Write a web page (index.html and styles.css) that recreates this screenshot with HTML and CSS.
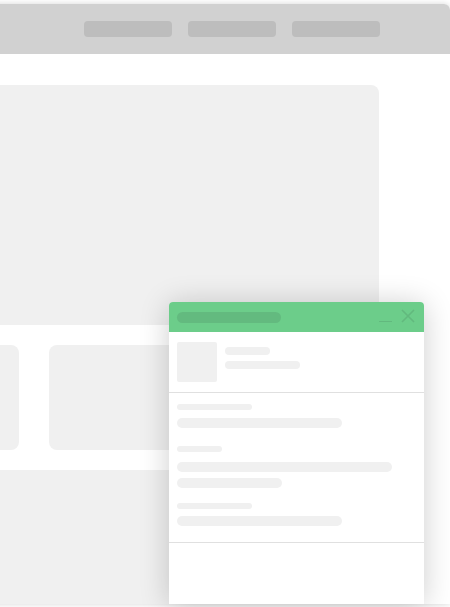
FILE: index.html
```html
<!DOCTYPE html>
<html>
<head>
<meta charset="utf-8">
<link rel="stylesheet" href="styles.css">
</head>
<body>
<div class="window">
  <header class="topbar">
    <span class="nav-pill"></span>
    <span class="nav-pill"></span>
    <span class="nav-pill"></span>
  </header>
  <main class="content">
    <section class="hero"></section>
    <section class="cards">
      <div class="card card-a"></div>
      <div class="card card-b"></div>
    </section>
    <section class="footer-block"></section>
  </main>
  <div class="chat">
    <div class="chat-head">
      <span class="chat-title"></span>
      <span class="chat-min"></span>
      <svg class="chat-close" width="14" height="14" viewBox="0 0 14 14"><path d="M1 1 L13 13 M13 1 L1 13" stroke="#62b97e" stroke-width="1.6" fill="none"/></svg>
    </div>
    <div class="chat-profile">
      <div class="avatar"></div>
      <div class="profile-lines">
        <span class="sk sk-name"></span>
        <span class="sk sk-sub"></span>
      </div>
    </div>
    <div class="chat-body">
      <span class="sk label w75"></span>
      <span class="sk bar w165 m8"></span>
      <span class="sk label w45 m18"></span>
      <span class="sk bar w215 m10"></span>
      <span class="sk bar w105 m6"></span>
      <span class="sk label w75 m15"></span>
      <span class="sk bar w165 m7"></span>
    </div>
    <div class="chat-foot"></div>
  </div>
</div>
</body>
</html>
```
FILE: styles.css
```css
html, body {
  margin: 0;
  padding: 0;
  background: #ffffff;
  overflow: hidden;
  width: 450px;
  height: 607px;
  font-family: "Liberation Sans", Arial, sans-serif;
}
.window {
  position: relative;
  margin: 4px 0 0 -20px;
  width: 470px;
  height: 600px;
  background: #ffffff;
  border-radius: 6px 6px 0 0;
  box-shadow: 0 0 6px rgba(0,0,0,0.16);
}
.topbar {
  height: 50px;
  background: #d1d1d1;
  border-radius: 6px 6px 0 0;
  display: flex;
  align-items: flex-start;
  gap: 16px;
  padding: 17px 0 0 104px;
  box-sizing: border-box;
}
.nav-pill {
  width: 88px;
  height: 16px;
  border-radius: 4px;
  background: #bdbdbd;
}
.content {
  width: 399px;
  padding-top: 31px;
}
.hero {
  height: 240px;
  background: #f0f0f0;
  border-radius: 8px 8px 0 0;
}
.cards {
  height: 145px;
  box-sizing: border-box;
  padding: 20px 0;
  display: flex;
  gap: 30px;
}
.card {
  background: #f0f0f0;
  border-radius: 8px;
}
.card-a { width: 39px; border-radius: 0 8px 8px 0; }
.card-b { width: 180px; }
.footer-block {
  height: 134px;
  background: #f0f0f0;
}
.chat {
  position: absolute;
  left: 189px;
  top: 298px;
  width: 255px;
  height: 302px;
  background: #ffffff;
  border-radius: 4px 4px 0 0;
  box-shadow: 0 2px 30px rgba(0,0,0,0.2);
  display: flex;
  flex-direction: column;
}
.chat-head {
  height: 30px;
  flex: none;
  background: #6ccd8a;
  border-radius: 4px 4px 0 0;
  display: flex;
  align-items: center;
  padding: 0 9px 0 8px;
  box-sizing: border-box;
}
.chat-title {
  width: 104px;
  height: 11px;
  border-radius: 6px;
  background: #63ba7f;
}
.chat-min {
  margin-left: auto;
  width: 13px;
  height: 1.5px;
  background: #62b97e;
  align-self: flex-end;
  margin-bottom: 10px;
}
.chat-close {
  margin-left: 9px;
  width: 14px;
  height: 14px;
  margin-top: -2px;
}
.chat-profile {
  display: flex;
  gap: 8px;
  padding: 10px 8px;
  border-bottom: 1px solid #e0e0e0;
}
.avatar {
  width: 40px;
  height: 40px;
  background: #f0f0f0;
  border-radius: 2px;
}
.profile-lines {
  display: flex;
  flex-direction: column;
  padding-top: 5px;
  gap: 6px;
}
.sk {
  display: block;
  background: #f0f0f0;
  border-radius: 5px;
}
.sk-name { width: 45px; height: 8px; }
.sk-sub { width: 75px; height: 8px; }
.chat-body {
  display: flex;
  flex-direction: column;
  align-items: flex-start;
  padding: 11px 8px 16px;
  border-bottom: 1px solid #e0e0e0;
}
.label { height: 6px; border-radius: 3px; }
.bar { height: 10px; }
.w45 { width: 45px; }
.w75 { width: 75px; }
.w105 { width: 105px; }
.w165 { width: 165px; }
.w215 { width: 215px; }
.m6 { margin-top: 6px; }
.m7 { margin-top: 7px; }
.m8 { margin-top: 8px; }
.m10 { margin-top: 10px; }
.m15 { margin-top: 15px; }
.m18 { margin-top: 18px; }
.chat-foot { flex: 1; }
```
